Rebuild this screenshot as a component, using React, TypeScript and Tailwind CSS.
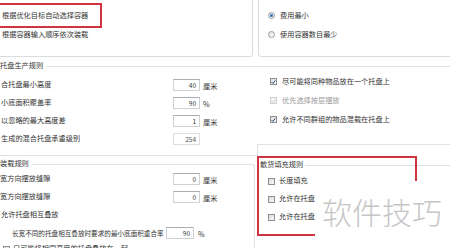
import React from 'react';

const Check = ({ checked = false, disabled = false }: { checked?: boolean; disabled?: boolean }) => (
  <span
    className={`flex h-[7px] w-[7px] shrink-0 items-center justify-center border ${
      disabled ? 'border-[#cfcfcf] bg-[#f6f6f6]' : 'border-[#8e8f8f] bg-gradient-to-br from-[#dadada] to-[#fbfbfb]'
    }`}
  >
    {checked && (
      <svg viewBox="0 0 8 8" className="h-[6px] w-[6px]">
        <path d="M1 4.2 L3.1 6.3 L7 1.4" fill="none" stroke={disabled ? '#c4c4c4' : '#2b4a7a'} strokeWidth="1.6" />
      </svg>
    )}
  </span>
);

const Radio = ({ on = false }: { on?: boolean }) => (
  <span className="flex h-[7px] w-[7px] shrink-0 items-center justify-center rounded-full border border-[#9a9a9a] bg-gradient-to-br from-[#dedede] to-white">
    {on && <span className="h-[3px] w-[3px] rounded-full bg-[#2e6fb8]" />}
  </span>
);

const NumBox = ({ value, disabled = false, w = 'w-[27px]' }: { value: string; disabled?: boolean; w?: string }) => (
  <span
    className={`flex h-[12px] shrink-0 items-center justify-end border pr-[3px] text-[6.5px] ${w} ${
      disabled ? 'border-[#dedede] text-[#555]' : 'border-[#cfd1d4] border-t-[#abadb3]'
    }`}
  >
    {value}
  </span>
);

const Unit = ({ children }: { children: React.ReactNode }) => <span className="ml-[3px] mt-[4px]">{children}</span>;

const palletRows = [
  { label: '合托盘最小高度', value: '40', unit: '厘米' },
  { label: '小底面积覆盖率', value: '90', unit: '%' },
  { label: '以忽略的最大高度差', value: '1', unit: '厘米' },
  { label: '生成的混合托盘承重级别', value: '254', unit: '', disabled: true },
];

export default function App() {
  return (
    <div className="relative h-[248px] w-[450px] overflow-hidden bg-white font-['Noto_Sans_CJK_SC','Noto_Sans',sans-serif] text-[7.2px] leading-none text-[#333]">
      {/* container choice */}
      <div className="flex h-[57px]">
        <div className="flex w-[253px] flex-col rounded-br-[3px] border-r border-b border-[#d9dde0] pl-[2px] pt-[6px]">
          <div className="flex h-[19px] items-center">根据优化目标自动选择容器</div>
          <div className="flex h-[19px] items-center">根据容器输入顺序依次装载</div>
        </div>
        <div className="ml-[5px] flex flex-1 flex-col rounded-bl-[3px] border-l border-b border-[#d9dde0] pl-[9px] pt-[6px]">
          <div className="flex h-[19px] items-center gap-[5px]">
            <Radio on />
            费用最小
          </div>
          <div className="flex h-[19px] items-center gap-[5px]">
            <Radio />
            使用容器数目最少
          </div>
        </div>
      </div>

      <div className="mt-[3px] flex h-[12px] items-center">
        <span>托盘生产规则</span>
        <span className="ml-[3px] h-px flex-1 bg-[#dfe3e6]" />
      </div>

      <div className="flex">
        {/* left column */}
        <div className="w-[257px]">
          <div className="pt-[4px]">
            {palletRows.map((r) => (
              <div key={r.label} className="flex h-[18px] items-center">
                <span className="w-[173px] shrink-0 whitespace-nowrap pl-[1px]">{r.label}</span>
                <NumBox value={r.value} disabled={r.disabled} />
                {r.unit && <Unit>{r.unit}</Unit>}
              </div>
            ))}
          </div>
          <div className="h-[8px] border-b border-[#dfe3e6]" />

          <div className="w-[255px]">
            <div className="mt-[2px] flex h-[12px]">
              <span className="self-center">装载规则</span>
              <span className="ml-[3px] mt-[6px] flex-1 rounded-tr-[3px] border-t border-r border-[#dfe3e6]" />
            </div>
            <div className="border-r border-[#dfe3e6]">
              <div className="flex h-[18px] items-center">
                <span className="w-[173px] shrink-0 whitespace-nowrap">宽方向摆放缝隙</span>
                <NumBox value="0" />
                <Unit>厘米</Unit>
              </div>
              <div className="flex h-[18px] items-center">
                <span className="w-[173px] shrink-0 whitespace-nowrap">宽方向摆放缝隙</span>
                <NumBox value="0" />
                <Unit>厘米</Unit>
              </div>
              <div className="flex h-[18px] items-center pl-[1px]">允许托盘相互叠放</div>
              <div className="flex h-[18px] items-center pl-[12px]">
                <span className="w-[154px] shrink-0 whitespace-nowrap text-[6.6px]">
                  长宽不同的托盘相互叠放时要求的最小底面积重合率
                </span>
                <NumBox value="90" w="w-[28px]" />
                <span className="ml-[4px] mt-[4px]">%</span>
              </div>
              <div className="flex h-[14px] items-center gap-[3px] pl-[3px]">
                <Check />
                只可能将相同高度的托盘叠放在一起
              </div>
            </div>
          </div>
        </div>

        {/* right column */}
        <div className="flex-1">
          <div className="flex h-[19px] items-center gap-[5px] pl-[13px]">
            <Check checked />
            尽可能将同种物品放在一个托盘上
          </div>
          <div className="flex h-[19px] items-center gap-[5px] pl-[13px] text-[#9a9a9a]">
            <Check checked disabled />
            优先选择按层摆放
          </div>
          <div className="flex h-[19px] items-center gap-[5px] pl-[13px]">
            <Check checked />
            允许不同群组的物品混载在托盘上
          </div>
          <div className="h-[16px] border-b border-[#dfe3e6]" />

          <div className="border-l border-[#dfe3e6] pt-[14px]">
            <div className="flex h-[12px] items-center">
              <span className="pl-[2px]">散货填充规则</span>
              <span className="ml-[2px] h-px flex-1 bg-[#dfe3e6]" />
            </div>
            <div className="mt-[1px]">
              <div className="flex h-[18px] items-center gap-[4px] pl-[10px]">
                <Check />
                长度填充
              </div>
              <div className="flex h-[18px] items-center gap-[4px] pl-[10px]">
                <Check />
                允许在托盘
              </div>
              <div className="flex h-[18px] items-center gap-[4px] pl-[10px]">
                <Check />
                允许在托盘
              </div>
            </div>
          </div>
        </div>
      </div>

      {/* annotation marks */}
      <div className="absolute left-[-2px] top-[3px] h-[25px] w-[104px] border-2 border-[#d0343f]" />
      <div className="absolute left-[257px] top-[156px] h-[80px] w-[160px] border-2 border-[#d0343f]" />

      {/* watermark */}
      <div className="absolute left-[315px] top-[181px] flex h-[60px] w-[140px] items-center bg-white pl-[7px] text-[30px] font-light text-[#c6c6c6]">
        软件技巧
      </div>
    </div>
  );
}
